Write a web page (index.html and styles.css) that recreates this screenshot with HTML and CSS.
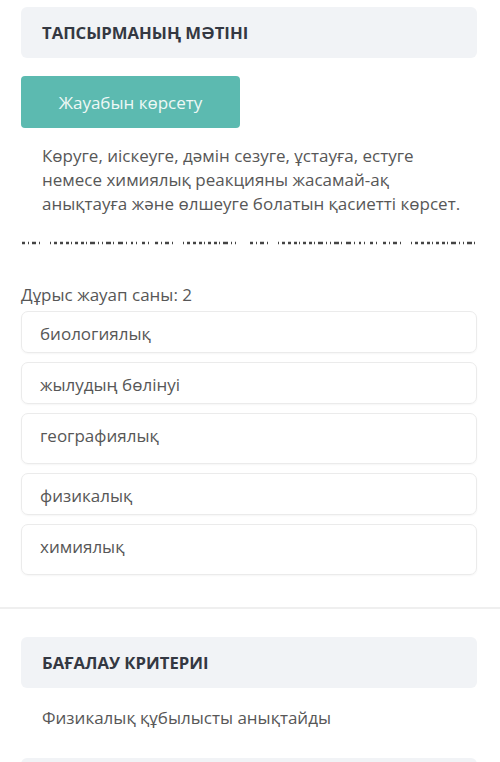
FILE: index.html
```html
<!DOCTYPE html>
<html lang="kk">
<head>
    <meta charset="UTF-8">
    <meta name="viewport" content="width=device-width, initial-scale=1.0">
    <title>Тапсырма</title>
    <link rel="stylesheet" href="styles.css">
</head>
<body>
    <div class="section">
        <div class="block-header">ТАПСЫРМАНЫҢ МӘТІНІ</div>

        <button class="show-answer">Жауабын көрсету</button>

        <p class="task-text">Көруге, иіскеуге, дәмін сезуге, ұстауға, естуге немесе химиялық реакцияны жасамай-ақ анықтауға және өлшеуге болатын қасиетті көрсет.</p>

        <!-- audio track marks -->
        <div class="track">
            <svg width="456" height="4" viewBox="0 0 456 4">
                <line x1="1" y1="2" x2="216" y2="2" class="marks"/>
                <line x1="229" y1="2" x2="456" y2="2" class="marks"/>
            </svg>
        </div>

        <div class="answer-count">Дұрыс жауап саны: 2</div>

        <div class="options">
            <div class="option">биологиялық</div>
            <div class="option">жылудың бөлінуі</div>
            <div class="option tall">географиялық</div>
            <div class="option">физикалық</div>
            <div class="option tall">химиялық</div>
        </div>
    </div>

    <div class="section criteria">
        <div class="block-header">БАҒАЛАУ КРИТЕРИІ</div>
        <p class="criteria-text">Физикалық құбылысты анықтайды</p>
        <div class="block-header next"></div>
    </div>
</body>
</html>
```

FILE: styles.css
```css
body {
    font-family: 'Open Sans', 'Noto Sans', sans-serif;
    margin: 0;
    background: #fff;
    color: #575757;
    overflow: hidden;
}
.section {
    padding: 7px 23px 0 21px;
}
.block-header {
    background: #f1f3f6;
    border-radius: 6px;
    height: 51px;
    padding: 0 21px;
    display: flex;
    align-items: center;
    font-size: 16.7px;
    font-weight: bold;
    color: #343842;
}
.show-answer {
    margin-top: 18px;
    width: 219px;
    height: 52px;
    background: #5cbab0;
    color: #eef8f6;
    border: none;
    border-radius: 4px;
    font-family: inherit;
    font-size: 17px;
    cursor: pointer;
}
.task-text {
    margin: 16px 0 0;
    padding: 0 0 0 21px;
    font-size: 17px;
    line-height: 24px;
}
.track {
    margin-top: 25px;
    height: 4px;
}
.track svg {
    display: block;
}
/* uneven dash run, repeated on both halves */
.marks {
    stroke: #444;
    stroke-width: 2.5;
    stroke-dasharray: 3 3 1 3 4 3 1 10 1 3 3 3 3 3 3 2 1 3 3 3 3 2 1 3 5 3 1 3 1 3 5 2 1 4 5 3 1 4 2 3 1 5 3 3 1 6;
}
.answer-count {
    margin-top: 38px;
    font-size: 17px;
    line-height: 24px;
}
.options {
    display: flex;
    flex-direction: column;
    gap: 9px;
    margin-top: 4px;
}
.option {
    border: 1.5px solid #ebebeb;
    border-radius: 7px;
    box-shadow: 0 1px 2px rgba(0, 0, 0, 0.04);
    height: 42px;
    box-sizing: border-box;
    padding: 10px 18px 0;
    font-size: 17px;
    line-height: 24px;
}
.option.tall {
    height: 51px;
}
.criteria {
    margin-top: 32px;
    border-top: 2px solid #efefef;
    padding-top: 28px;
}
.criteria-text {
    margin: 18px 0 0;
    padding: 0 21px;
    font-size: 17px;
    line-height: 24px;
}
.block-header.next {
    margin-top: 28px;
}
```
